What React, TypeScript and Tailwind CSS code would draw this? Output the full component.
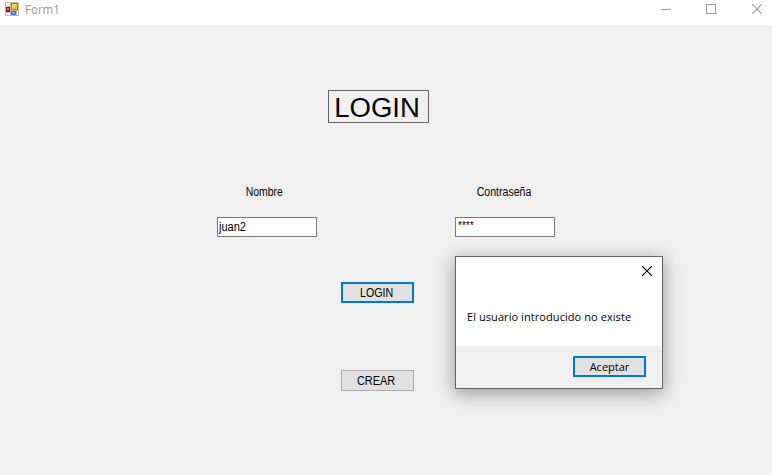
import type { ReactNode } from "react";

function FormIcon() {
  return (
    <svg width="14" height="14" viewBox="0 0 14 14" shapeRendering="crispEdges">
      <defs>
        <linearGradient id="gold" x1="0" y1="0" x2="1" y2="1">
          <stop offset="0" stopColor="#ffe27a" />
          <stop offset="1" stopColor="#f5b400" />
        </linearGradient>
      </defs>
      <rect width="14" height="14" fill="#bdbdbd" />
      <rect x="1" y="1" width="4" height="3" fill="#fff" />
      <rect x="1" y="11" width="4" height="2" fill="#fff" />
      <rect x="12" y="9" width="1" height="4" fill="#fff" />
      <rect x="1" y="5" width="4" height="5" fill="#a80f0f" />
      <rect x="2" y="6" width="2" height="2" fill="#ee6a5c" />
      <rect x="6" y="1" width="7" height="7" fill="#b87d10" />
      <rect x="7" y="2" width="5" height="5" fill="url(#gold)" />
      <rect x="6" y="9" width="5" height="4" fill="#2f66c8" />
      <rect x="7" y="10" width="3" height="2" fill="#80aaf5" />
    </svg>
  );
}

function CloseIcon({ color }: { color: string }) {
  return (
    <svg width="10" height="10" viewBox="0 0 10 10" stroke={color} strokeWidth="1.1">
      <path d="M0 0 10 10M10 0 0 10" />
    </svg>
  );
}

function Button({ children, focused = false }: { children: ReactNode; focused?: boolean }) {
  return (
    <button
      className={`flex h-[21px] w-[73px] items-center justify-center bg-[#e1e1e1] text-black ${
        focused ? "border-2 border-[#0078d7]" : "border border-[#adadad]"
      }`}
    >
      {children}
    </button>
  );
}

function Field({ label, children }: { label: ReactNode; children: ReactNode }) {
  return (
    <div className="flex w-[100px] flex-col items-center">
      <label className="mb-[18px] h-[14px] leading-[14px]">{label}</label>
      <div className="h-5 w-full border border-[#7a7a7a] bg-white pl-[1px] leading-[18px]">{children}</div>
    </div>
  );
}

export default function App() {
  return (
    <div className="relative flex h-[475px] w-[772px] flex-col overflow-hidden bg-[#f0f0f0] font-['Liberation_Sans',Arial,sans-serif] text-[12px] text-black">
      <header className="flex h-[25px] shrink-0 items-start bg-white pl-[5px] pr-[10px]">
        <div className="pt-[2px]">
          <FormIcon />
        </div>
        <span className="ml-[6px] origin-left scale-x-[0.96] pt-[2px] font-['Open_Sans',sans-serif] text-[12px] leading-[16px] text-[#999]">
          Form1
        </span>
        <div className="ml-auto flex pt-[4px]">
          <svg width="10" height="10" className="mr-[35px]" stroke="#999">
            <path d="M0 5.5H10" />
          </svg>
          <svg width="10" height="10" className="mr-[36px]" fill="none" stroke="#999">
            <rect x=".5" y=".5" width="9" height="9" />
          </svg>
          <CloseIcon color="#999" />
        </div>
      </header>

      <main className="flex flex-col pt-[65px]">
        <h1 className="ml-[328px] flex h-[33px] w-[101px] items-center justify-center border border-[#646464] pr-[2px] pt-[3px] text-[27px] leading-[31px]">
          <span className="scale-x-[1.02]">LOGIN</span>
        </h1>
        <div className="ml-[217px] mt-[62px] flex gap-[138px]">
          <Field label={<span className="inline-block translate-x-[-3px] scale-x-[0.87]">Nombre</span>}>
            <span className="inline-block origin-left scale-x-[0.92]">juan2</span>
          </Field>
          <Field label={<span className="inline-block translate-x-[-1px] scale-x-[0.88]">Contraseña</span>}>
            <span className="block pl-[1px] text-[10px] leading-[16px]">****</span>
          </Field>
        </div>
        <div className="ml-[341px] mt-[45px] flex flex-col gap-[67px]">
          <Button focused>
            <span className="inline-block translate-x-[-1px] scale-x-[0.89]">LOGIN</span>
          </Button>
          <Button>
            <span className="inline-block translate-x-[-1px] scale-x-[0.91]">CREAR</span>
          </Button>
        </div>
      </main>

      <div
        role="dialog"
        className="absolute left-[455px] top-[256px] flex h-[133px] w-[208px] flex-col border border-[#646464] bg-white font-['Open_Sans',sans-serif] text-[11px] shadow-[0_4px_17px_1px_rgba(0,0,0,0.34)]"
      >
        <div className="flex h-[44px] justify-end pr-[10px] pt-[9px]">
          <CloseIcon color="#000" />
        </div>
        <p className="h-[45px] whitespace-nowrap pl-[11px] pt-[8px] leading-[16px] tracking-[0.07px]">
          El usuario introducido no existe
        </p>
        <footer className="flex flex-1 justify-end bg-[#f0f0f0] pr-4 pt-[10px]">
          <Button focused>
            <span className="pt-[1px]">Aceptar</span>
          </Button>
        </footer>
      </div>
    </div>
  );
}
